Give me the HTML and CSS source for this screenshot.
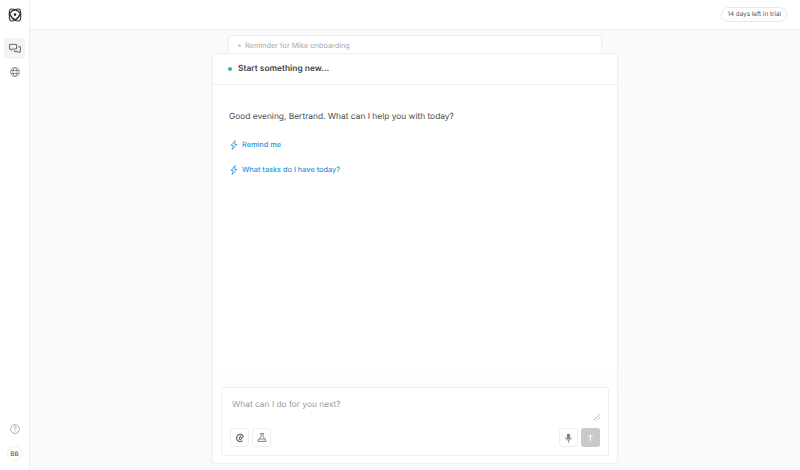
FILE: index.html
```html
<!DOCTYPE html>
<html lang="en">
<head>
<meta charset="utf-8">
<title>Assistant</title>
<link rel="stylesheet" href="styles.css">
</head>
<body>
<div class="app">
  <aside class="sidebar">
    <div class="logo">
      <svg width="14" height="14" viewBox="0 0 14 14" fill="none" stroke="#333" stroke-width="1.1">
        <path d="M2.6 1.2 C4.2.6 5.6 1.5 7 1.5 S9.8.6 11.4 1.2 C13 2 12.6 5 12.7 7 S13 12 11.4 12.8 C9.8 13.4 8.4 12.5 7 12.5 S4.2 13.4 2.6 12.8 C1 12 1.4 9 1.3 7 S1 2 2.6 1.2Z"/>
        <path d="M1.5 5.6 C3 3.6 5 2 7 1.8 C9 2 11 3.6 12.5 5.6 C11.4 8 9 11 7 12 C5 11 2.6 8 1.5 5.6Z" stroke-width="1.4"/>
        <circle cx="7" cy="6.6" r="1.3" fill="#222" stroke="none"/>
      </svg>
    </div>
    <nav class="nav">
      <div class="nav-item active">
        <svg width="12" height="11" viewBox="0 0 12 11" fill="none" stroke="#666" stroke-width="1" stroke-linejoin="round">
          <path d="M.6 1.4h7v4.6H3.6L2.2 7.4V6H.6z"/>
          <path d="M9 3.8h2.4v4.8h-1V10L9 8.6H5.4V7.2"/>
        </svg>
      </div>
      <div class="nav-item">
        <svg width="10" height="10" viewBox="0 0 10 10" fill="none" stroke="#888" stroke-width="0.9">
          <circle cx="5" cy="5" r="4.4"/>
          <ellipse cx="5" cy="5" rx="2" ry="4.4"/>
          <path d="M1 3.5h8M1 6.5h8"/>
        </svg>
      </div>
    </nav>
    <div class="side-bottom">
      <svg width="10" height="10" viewBox="0 0 10 10" fill="none" stroke="#999" stroke-width="0.8">
        <circle cx="5" cy="5" r="4.4"/>
        <path d="M3.7 3.9c0-1.7 2.6-1.7 2.6-.1 0 1-1.3 1-1.3 2.1M5 6.8v.8"/>
      </svg>
      <div class="avatar">BB</div>
    </div>
  </aside>
  <div class="content">
    <header class="topbar"><span class="trial">14 days left in trial</span></header>
    <main class="main">
      <div class="peek"><span class="peek-dot"></span>Reminder for Mike onboarding</div>
      <section class="card">
        <div class="card-head"><span class="status"></span>Start something new...</div>
        <div class="chat">
          <p class="greeting">Good evening, Bertrand. What can I help you with today?</p>
          <a class="suggest">
            <svg width="8" height="10" viewBox="0 0 8 10" fill="none" stroke="#3ba0e0" stroke-width="0.9" stroke-linejoin="round"><path d="M5.2.5 1 5.4h2.2L2.2 9.5 7 4.4H4.6z"/></svg>
            Remind me
          </a>
          <a class="suggest">
            <svg width="8" height="10" viewBox="0 0 8 10" fill="none" stroke="#3ba0e0" stroke-width="0.9" stroke-linejoin="round"><path d="M5.2.5 1 5.4h2.2L2.2 9.5 7 4.4H4.6z"/></svg>
            What tasks do I have today?
          </a>
        </div>
        <div class="fade"></div>
        <div class="composer">
          <div class="placeholder">What can I do for you next?</div>
          <svg class="grip" width="6" height="6" viewBox="0 0 6 6" stroke="#aaa" stroke-width="0.8"><path d="M0 6 6 0M3 6l3-3"/></svg>
          <div class="tools">
            <div class="group">
              <button class="tool">
                <svg width="8" height="9" viewBox="0 0 8 9" fill="none" stroke="#666" stroke-width="1.2"><path d="M6.4 7.8A3.6 3.6 0 1 1 7.2 3L5.2 6a1 1 0 0 1-1.7-1.1L5 2.8"/></svg>
              </button>
              <button class="tool">
                <svg width="10" height="9" viewBox="0 0 10 9" fill="none" stroke="#777" stroke-width="0.9" stroke-linejoin="round"><path d="M3.2.6h3.6M4 .6v3L1 7v1.4h8V7L6 3.6V.6M2.2 6h5.6"/></svg>
              </button>
            </div>
            <div class="group">
              <button class="tool">
                <svg width="7" height="10" viewBox="0 0 7 10" fill="none"><rect x="1.8" y="0.4" width="3.4" height="6.2" rx="1.7" fill="#888"/><path d="M.6 4.4a2.9 2.9 0 0 0 5.8 0M3.5 7.4v2.4" stroke="#888" stroke-width="0.9"/></svg>
              </button>
              <button class="send">
                <svg width="7" height="8" viewBox="0 0 7 8" fill="none" stroke="#fff" stroke-width="0.9"><path d="M3.5 7.6V.9M1 3.3 3.5.9 6 3.3"/></svg>
              </button>
            </div>
          </div>
        </div>
      </section>
    </main>
  </div>
</div>
</body>
</html>
```

FILE: styles.css
```css
* { box-sizing: border-box; }
html, body { margin: 0; height: 100%; }
body { font-family: Inter, "Liberation Sans", sans-serif; color: #333; background: #fafafa; overflow: hidden; text-rendering: geometricPrecision; -webkit-font-smoothing: antialiased; }
.app { display: flex; height: 470px; }
.sidebar { width: 30px; flex: none; background: #fff; border-right: 1px solid #efefef; display: flex; flex-direction: column; align-items: center; }
.logo { height: 30px; width: 100%; display: flex; align-items: center; justify-content: center; }
.nav { display: flex; flex-direction: column; align-items: center; gap: 2px; margin-top: 8px; }
.nav-item { width: 21px; height: 21px; border-radius: 3px; display: flex; align-items: center; justify-content: center; }
.nav-item.active { background: #f3f3f3; }
.side-bottom { margin-top: auto; padding-bottom: 9px; display: flex; flex-direction: column; align-items: center; gap: 12px; }
.avatar { width: 15px; height: 15px; border-radius: 50%; border: 1px solid #efefef; font-size: 6.3px; font-weight: 500; color: #555; display: flex; align-items: center; justify-content: center; }
.content { flex: 1; display: flex; flex-direction: column; min-width: 0; }
.topbar { height: 30px; flex: none; background: #fff; border-bottom: 1px solid #eee; display: flex; align-items: center; justify-content: flex-end; padding-right: 13px; }
.trial { height: 15px; padding: 0 5px; border: 1px solid #e8e8e8; border-radius: 8px; font-size: 6.3px; line-height: 13px; color: #555; }
.main { flex: 1; display: flex; flex-direction: column; align-items: center; padding-top: 5px; }
.peek { width: 374px; height: 18px; background: #fff; border: 1px solid #eee; border-bottom: 0; border-radius: 4px 4px 0 0; padding: 1px 9px 0; display: flex; align-items: center; font-size: 7.33px; color: #aaa; flex: none; }
.peek-dot { width: 3px; height: 3px; border-radius: 50%; background: #c4ccd4; margin-right: 4px; }
.card { width: 406px; height: 411px; flex: none; background: #fff; border: 1px solid #eee; border-radius: 3px; display: flex; flex-direction: column; }
.card-head { height: 31px; flex: none; border-bottom: 1px solid #eee; display: flex; align-items: center; padding-left: 15px; font-size: 8.38px; font-weight: 600; color: #444; }
.status { width: 4px; height: 4px; border-radius: 50%; background: #2bb98a; margin-right: 6px; }
.chat { flex: 1; padding: 26px 16px 0; display: flex; flex-direction: column; }
.greeting { margin: 0 0 16px; font-size: 8.38px; line-height: 12px; color: #4a4a4a; }
.suggest { display: flex; align-items: center; gap: 4px; height: 11px; margin: 0 0 14px 1px; font-size: 7.33px; font-weight: 500; color: #2a96da; }
.fade { height: 17px; flex: none; background: linear-gradient(#fff, #fdfdfd); }
.composer { position: relative; height: 69px; flex: none; margin: 0 8px 7px; border: 1px solid #eee; border-radius: 3px; padding: 12px 8px 8px; display: flex; flex-direction: column; }
.placeholder { font-size: 8.38px; line-height: 11px; color: #9a9a9a; padding-left: 2px; }
.grip { position: absolute; right: 8px; bottom: 35px; }
.tools { margin-top: auto; display: flex; justify-content: space-between; }
.group { display: flex; gap: 3px; }
.tool { width: 19px; height: 19px; padding: 0; background: #fff; border: 1px solid #eee; border-radius: 3px; display: flex; align-items: center; justify-content: center; }
.send { width: 19px; height: 19px; padding: 0; background: #c9c9c9; border: 0; border-radius: 3px; display: flex; align-items: center; justify-content: center; }
```
